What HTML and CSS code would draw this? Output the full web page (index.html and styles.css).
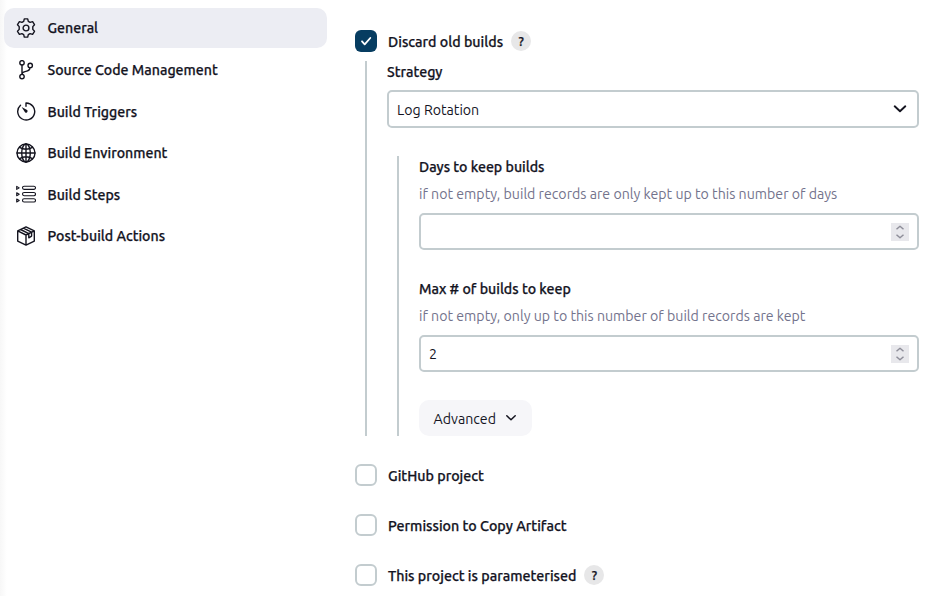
FILE: index.html
```html
<!DOCTYPE html>
<html lang="en">
<head>
<meta charset="utf-8">
<title>General</title>
<link rel="stylesheet" href="styles.css">
</head>
<body>
<div class="page">
  <nav class="side">
    <a class="task active"><svg class="icon" viewBox="0 0 20 20"><path d="M8.300 .9h3.400l.6 2.500 1.800 1 2.500-.7 1.900 3-1.700 1.900v2.800l1.700 1.900-1.900 3-2.500-.7-1.800 1-.6 2.500H8.300l-.6-2.500-1.800-1-2.500.7-1.900-3 1.700-1.900V8.600L1.500 6.700l1.900-3 2.500.7 1.800-1z"/><circle cx="10" cy="10" r="2.900"/></svg><span>General</span></a>
    <a class="task"><svg class="icon" viewBox="0 0 20 20"><circle cx="6" cy="2.800" r="2.200"/><circle cx="6" cy="16.600" r="2.200"/><circle cx="14.200" cy="5.400" r="2.200"/><path d="M6 5v9.400M14 7.600c-.3 3.500-2.800 3.500-5 4-1.800.4-3 .9-3 2.600"/></svg><span>Source Code Management</span></a>
    <a class="task triggers"><svg class="icon" viewBox="0 0 20 20"><path d="M4.500 3.200A8.500 8.500 0 1 0 10 1v3.200"/><path class="solid" d="M5.600 4.900l5.500 3.200a1.500 1.500 0 1 1-2.100 2.200z"/></svg><span>Build Triggers</span></a>
    <a class="task"><svg class="icon" viewBox="0 0 20 20"><circle cx="10" cy="10" r="9"/><ellipse cx="10" cy="10" rx="4.300" ry="9"/><path d="M10 1v18M1 10h18M3.500 4.300c4 2.300 9 2.300 13 0M3.500 15.700c4-2.300 9-2.300 13 0"/></svg><span>Build Environment</span></a>
    <a class="task"><svg class="icon thin" viewBox="0 0 20 20"><rect x="6.500" y="1.200" width="13" height="3.200" rx="1.600"/><rect x="6.500" y="7.500" width="13" height="3.200" rx="1.600"/><rect x="6.500" y="13.800" width="13" height="3.200" rx="1.600"/><path d="M.7 1.400l2.500 1.500L.7 4.400zM.7 7.700l2.500 1.500L.7 10.700zM.7 14L3.200 15.500 .7 17z"/></svg><span>Build Steps</span></a>
    <a class="task"><svg class="icon" viewBox="0 0 20 20"><path d="M10 .9l8.300 4v10.200L10 19.100l-8.300-4V4.900zM1.700 4.900L10 9l8.300-4.100M10 9v10M4.600 3.500L12.800 7.600v4.200l2.800-1.700V6.200L7.300 2.200"/></svg><span>Post-build Actions</span></a>
  </nav>
  <main class="form">
    <div class="check-row"><span class="box checked"><svg viewBox="0 0 22 22"><path d="M7 11.300l2.700 3L15.300 8"/></svg></span><span class="caption">Discard old builds</span><span class="help">?</span></div>
    <section class="group outer">
      <div class="label strategy">Strategy</div>
      <div class="field select"><span class="caption">Log Rotation</span><svg class="chevron" viewBox="0 0 14 8"><path d="M1.700 1.300L7 6.300l5.300-5"/></svg></div>
      <section class="group inner">
        <div class="label">Days to keep builds</div>
        <div class="hint">if not empty, build records are only kept up to this number of days</div>
        <div class="field"><span></span><span class="spin"><svg viewBox="0 0 18 18"><path d="M5.500 6.300L9 3.300l3.500 3M5.500 11.700l3.500 3 3.500-3"/></svg></span></div>
        <div class="label second">Max # of builds to keep</div>
        <div class="hint">if not empty, only up to this number of build records are kept</div>
        <div class="field"><span>2</span><span class="spin"><svg viewBox="0 0 18 18"><path d="M5.500 6.300L9 3.300l3.500 3M5.500 11.700l3.500 3 3.500-3"/></svg></span></div>
        <div class="advanced"><span class="caption">Advanced</span><svg viewBox="0 0 10 6"><path d="M.8.8L5 4.800 9.200.8"/></svg></div>
      </section>
    </section>
    <div class="options">
      <div class="check-row"><span class="box"></span><span class="caption">GitHub project</span></div>
      <div class="check-row"><span class="box"></span><span class="caption">Permission to Copy Artifact</span></div>
      <div class="check-row"><span class="box"></span><span class="caption">This project is parameterised</span><span class="help">?</span></div>
    </div>
  </main>
</div>
</body>
</html>
```
FILE: styles.css
```css
* { box-sizing: border-box; }
body { margin: 0; background: #fff; color: #14141f; font: 400 14.18px/20px "Ubuntu", "Noto Sans", sans-serif; }
svg { fill: none; stroke: currentColor; stroke-linecap: round; stroke-linejoin: round; flex: none; }
span { white-space: nowrap; }
.page { display: flex; width: 947px; height: 596px; overflow: hidden; background: linear-gradient(90deg, #f7f7f7, #fff 7px); }
.side { width: 323px; margin: 8px 28px 0 4px; display: flex; flex-direction: column; gap: 1.65px; flex: none; font-size: 14.16px; }
.task { height: 40px; padding-left: 12px; display: flex; align-items: center; gap: 11.5px; border-radius: 10px; font-weight: 500; }
.task, .check-row, .label { -webkit-text-stroke: .25px currentColor; }
.triggers { padding-top: 1px; }
.active { background: #ecedf3; }
.icon { width: 20px; height: 20px; stroke-width: 1.4; }
.thin { stroke-width: 1.1; }
.solid { fill: currentColor; stroke: none; }
.form { width: 564px; padding-top: 30px; }
.check-row { height: 22px; display: flex; align-items: center; font-size: 14.25px; font-weight: 500; }
.caption { padding-top: 2px; }
.box { width: 22px; height: 22px; border: 2px solid #c3cccf; border-radius: 6px; margin-right: 11px; flex: none; }
.checked { border: 0; background: #073d61; color: #fff; }
.checked svg { display: block; stroke-width: 1.8; }
.help { width: 20px; height: 20px; margin-left: 8px; border-radius: 50%; background: #e7e7e8; font-size: 13px; font-weight: 500; text-align: center; }
.group { border-left: 2px solid #c3cccf; }
.outer { margin: 9px 0 0 10px; padding-left: 20px; height: 375px; }
.inner { margin: 28px 0 0 10px; padding-left: 20px; height: 280px; }
.label { height: 21px; padding-top: 1px; font-weight: 500; }
.strategy { height: 29px; }
.second { margin-top: 28px; }
.hint { height: 36px; padding-top: 7px; color: #73738c; }
.field { height: 37px; border: 2px solid #c3cccf; border-radius: 5px; padding: 0 8px; display: flex; align-items: center; justify-content: space-between; }
.select { height: 38px; padding-right: 10px; }
.chevron { width: 14px; height: 8px; stroke-width: 1.9; }
.spin { width: 18px; height: 18px; background: #e8e8ec; color: #8e8e99; }
.spin svg { display: block; stroke-width: 1.5; stroke-linecap: butt; }
.advanced { width: 113px; height: 36px; margin-top: 28px; padding: 0 16px 0 14.5px; display: flex; align-items: center; justify-content: space-between; background: #f6f6f9; border-radius: 10px; }
.advanced svg { width: 10px; height: 6px; stroke-width: 1.5; }
.options { margin-top: 28px; display: flex; flex-direction: column; gap: 28px; }
```
